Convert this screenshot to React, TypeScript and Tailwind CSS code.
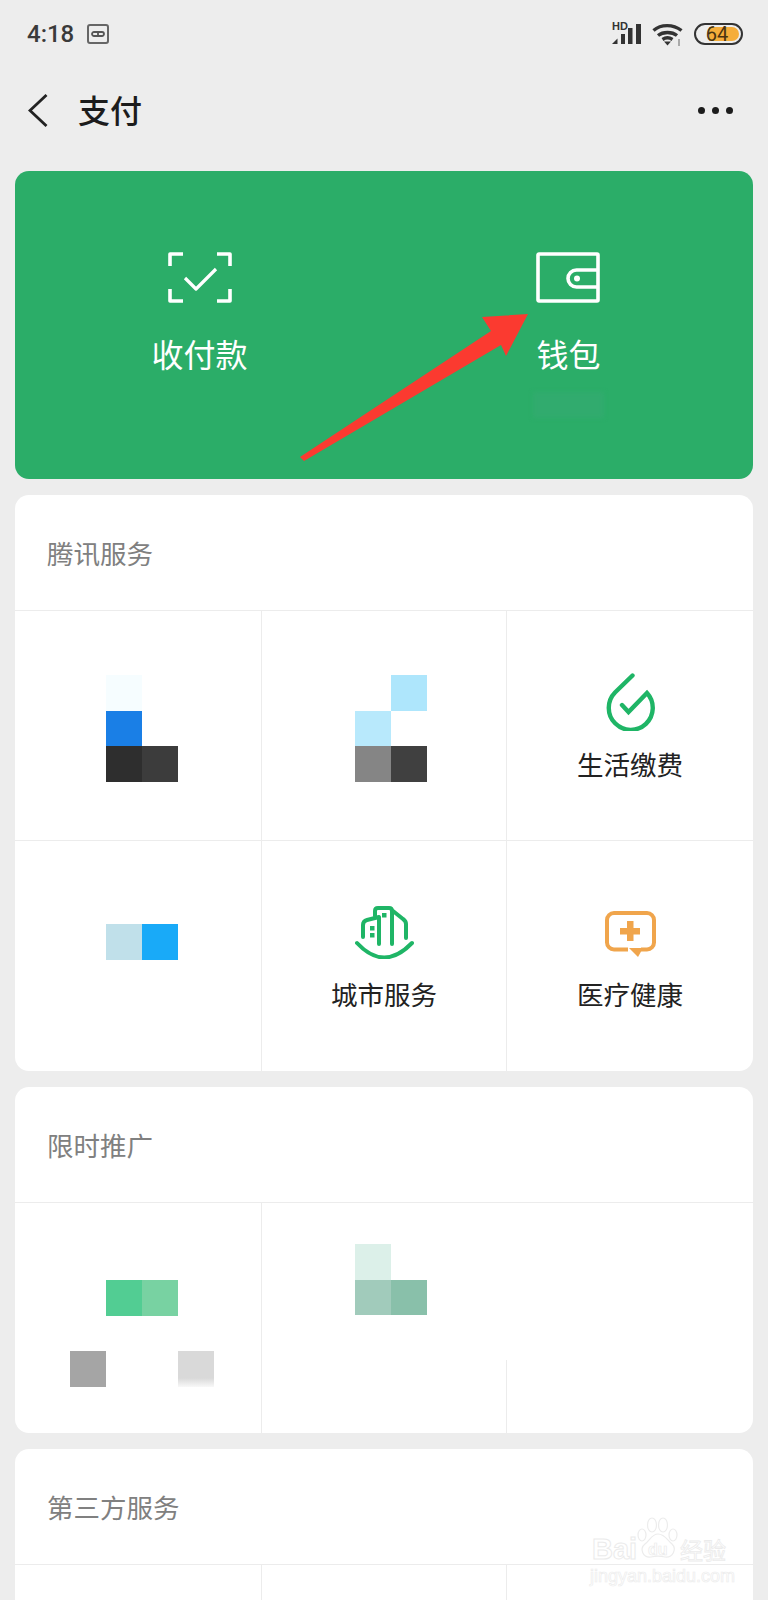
import React from "react";

type MosaicRows = string[][];

function Mosaic({ rows }: { rows: MosaicRows }) {
  return (
    <div className="grid grid-cols-[repeat(4,36px)] auto-rows-[35.5px]">
      {rows.flat().map((color, i) => (
        <div key={i} className={color} />
      ))}
    </div>
  );
}

function DropIcon() {
  return (
    <svg width="49" height="58" viewBox="0 0 49 58" fill="none" stroke="#1fb566" strokeWidth="4.4" strokeLinecap="round" strokeLinejoin="miter">
      <path d="M26.500 2.500L9 19.500A22 22 0 1 0 41 20L22.500 39L16 32" />
    </svg>
  );
}

function CityIcon() {
  return (
    <svg width="59" height="53" viewBox="0 0 59 53" fill="none" stroke="#1fb566" strokeWidth="4" strokeLinecap="round" strokeLinejoin="round">
      <path d="M2 37Q29 66 57 37" />
      <path d="M8 31V19Q8 15 12 14L24 11V38" />
      <path d="M20 10V5Q20 2 23 2H34Q37 2 37 5V38" />
      <path d="M38 5L48 13Q51 15 51 18V32" />
      <rect x="15" y="20" width="4.500" height="4.500" fill="#1fb566" stroke="none" />
      <rect x="15" y="27" width="4.500" height="4.500" fill="#1fb566" stroke="none" />
      <rect x="27" y="7" width="4.500" height="4.500" fill="#1fb566" stroke="none" />
    </svg>
  );
}

function MedicalIcon() {
  return (
    <svg className="mt-1" width="51" height="46" viewBox="0 0 51 46" fill="none">
      <path d="M23 38.500H9a7 7 0 0 1-7-7V9a7 7 0 0 1 7-7H42a7 7 0 0 1 7 7V31.500a7 7 0 0 1-7 7H36" stroke="#f0a54c" strokeWidth="4" />
      <path d="M24 37H38L33 46Z" fill="#f0a54c" />
      <path d="M15 17H22V10H28.500V17H35V23.500H28.500V30H22V23.500H15Z" fill="#f0a54c" />
    </svg>
  );
}

function ServiceCell({ icon, label, className }: { icon: React.ReactNode; label: string; className: string }) {
  return (
    <div className={`flex flex-col items-center pt-[62px] ${className}`}>
      <div className="flex h-[58px] items-center justify-center">{icon}</div>
      <div className="mt-[18px] text-[26.500px] leading-[30px] text-[#222222]">{label}</div>
    </div>
  );
}

function SectionTitle({ title }: { title: string }) {
  return <div className="flex h-[115px] items-center pl-[32px] text-[26.500px] text-[#808080]">{title}</div>;
}

function StatusBar() {
  return (
    <div className="flex h-[68px] items-center justify-between pl-[27px] pr-[25px]">
      <div className="flex items-center gap-[13px]">
        <span className="font-['Roboto',sans-serif] text-[24px] font-medium leading-none text-[#3a3a3a]">4:18</span>
        <div className="flex h-[20px] w-[22px] items-center justify-center rounded-[3px] border-2 border-[#666666]">
          <svg width="14" height="6" viewBox="0 0 14 6" fill="none" stroke="#555555" strokeWidth="1.800">
            <rect x="1" y="1" width="12" height="4" rx="2" />
            <path d="M7 1V5" />
          </svg>
        </div>
      </div>
      <div className="flex items-center">
        <div className="relative h-[22px] w-[30px]">
          <span className="absolute left-0 top-[-2px] font-['Liberation_Sans',sans-serif] text-[11px] font-bold leading-[11px] text-[#333333]">HD</span>
          <svg width="30" height="22" viewBox="0 0 30 22" fill="#333333">
            <path d="M0 21L5.500 15.500V21Z" />
            <rect x="9" y="11" width="4" height="10" />
            <rect x="16" y="5" width="4.500" height="16" />
            <rect x="24" y="1" width="5" height="20" />
          </svg>
        </div>
        <svg className="ml-[10px]" width="32" height="23" viewBox="0 0 32 23" fill="none" stroke="#333333" strokeWidth="3.400">
          <path d="M1.500 7.500C9 1 21 1 29.500 7.500" />
          <path d="M6 12.500C11 8.500 20 8.500 25 12.500" />
          <path d="M10.500 16.500C13.500 14.500 17.500 14.500 20.500 16.500" />
          <path d="M12 18.500L15.500 22.500L19 18.500Z" fill="#333333" stroke="none" />
          <path d="M27 16V23" stroke="#aaaaaa" strokeWidth="2" />
        </svg>
        <div className="relative ml-[10px] h-[22px] w-[49px] rounded-full border-2 border-[#333333]">
          <div className="absolute bottom-[2px] left-[13px] right-[2px] top-[2px] rounded-r-full bg-[#f5ad3a]" />
          <span className="absolute inset-0 flex items-center justify-center pr-[3px] font-['Roboto',sans-serif] text-[20px] leading-none text-[#4a3310]">64</span>
        </div>
      </div>
    </div>
  );
}

function NavBar() {
  return (
    <div className="flex h-[84px] items-center justify-between pl-[28px] pr-[35px]">
      <div className="flex items-center">
        <svg width="20" height="33" viewBox="0 0 20 33" fill="none" stroke="#222222" strokeWidth="2.800">
          <path d="M18.500 1L2 16.500L18.500 32" />
        </svg>
        <span className="ml-[30px] mt-[-2px] text-[32px] font-medium leading-[40px] text-[#1c1c1c]">支付</span>
      </div>
      <div className="flex gap-[7px]">
        <div className="h-[7px] w-[7px] rounded-full bg-[#1c1c1c]" />
        <div className="h-[7px] w-[7px] rounded-full bg-[#1c1c1c]" />
        <div className="h-[7px] w-[7px] rounded-full bg-[#1c1c1c]" />
      </div>
    </div>
  );
}

function PayCard() {
  return (
    <div className="relative grid h-[308px] grid-cols-2 rounded-[14px] bg-[#2bad68] pt-[81px] text-white">
      <div className="flex flex-col items-center">
        <svg width="64" height="51" viewBox="0 0 64 51" fill="none" stroke="white" strokeWidth="3.600" strokeLinejoin="round">
          <path d="M15 2H2V14" />
          <path d="M49 2H62V14" />
          <path d="M2 37V49H15" />
          <path d="M62 37V49H49" />
          <path d="M17 26L28 37L48 17" strokeWidth="3.200" />
        </svg>
        <div className="mt-[30px] text-[32px] leading-[40px]">收付款</div>
      </div>
      <div className="flex flex-col items-center">
        <svg className="ml-[-1px]" width="64" height="51" viewBox="0 0 64 51" fill="none" stroke="white" strokeWidth="3.600">
          <rect x="2" y="2" width="60" height="47" rx="1" />
          <path d="M62 18H40.500a8.500 8.500 0 0 0 0 17H62" />
          <circle cx="41" cy="26.500" r="3" fill="white" stroke="none" />
        </svg>
        <div className="mt-[30px] text-[32px] leading-[40px]">钱包</div>
        <div className="mt-[19px] h-[26px] w-[71px] bg-[#31ab6e] blur-[2px]" />
      </div>
      {/* red annotation arrow */}
      <svg className="absolute inset-0 h-full w-full" viewBox="0 0 738 308">
        <polygon points="513,143 467,146 476,160 285,286 289,290 486,174 491,185" fill="#fb3a30" />
      </svg>
    </div>
  );
}

export default function App() {
  const cellBorder = "border-t border-[#ececec]";
  return (
    <div className="relative h-[1600px] w-[768px] overflow-hidden bg-[#ededed] font-['Noto_Sans_CJK_SC',sans-serif]">
      <StatusBar />
      <NavBar />
      <div className="mt-[19px] flex flex-col gap-4 pl-[15px] pr-[15px]">
        <PayCard />

        <div className="overflow-hidden rounded-[14px] bg-white">
          <SectionTitle title="腾讯服务" />
          <div className="grid grid-cols-[247px_245px_246px] grid-rows-[230px_231px]">
            <div className={`${cellBorder} border-r pl-[55px] pt-[64px]`}>
              <Mosaic
                rows={[
                  ["", "bg-[#f6fdff]", "", ""],
                  ["", "bg-[#1a7fe6]", "", ""],
                  ["", "bg-[#2e2e2e]", "bg-[#3c3c3c]", ""],
                ]}
              />
            </div>
            <div className={`${cellBorder} border-r pl-[93px] pt-[64px]`}>
              <Mosaic
                rows={[
                  ["", "bg-[#aee6fc]", "", ""],
                  ["bg-[#b8e9fc]", "", "", ""],
                  ["bg-[#858585]", "bg-[#404040]", "", ""],
                ]}
              />
            </div>
            <ServiceCell className={cellBorder} icon={<DropIcon />} label="生活缴费" />
            <div className={`${cellBorder} border-r pl-[55px] pt-[83px]`}>
              <Mosaic rows={[["", "bg-[#c0e0ea]", "bg-[#19aaf8]", ""]]} />
            </div>
            <ServiceCell className={`${cellBorder} border-r`} icon={<CityIcon />} label="城市服务" />
            <ServiceCell className={cellBorder} icon={<MedicalIcon />} label="医疗健康" />
          </div>
        </div>

        <div className="overflow-hidden rounded-[14px] bg-white">
          <SectionTitle title="限时推广" />
          <div className="grid grid-cols-[247px_245px_246px] auto-rows-[231px]">
            <div className={`${cellBorder} border-r pl-[55px] pt-[77px]`}>
              <Mosaic
                rows={[
                  ["", "bg-[#52cd93]", "bg-[#78d2a2]", ""],
                  ["", "", "", ""],
                  ["bg-[#a5a5a5]", "", "", "bg-[linear-gradient(#d9d9d9_75%,#f8f8f8)]"],
                ]}
              />
            </div>
            <div className={`${cellBorder} relative pl-[93px] pt-[41px]`}>
              <Mosaic
                rows={[
                  ["bg-[#dcf0e9]", "", "", ""],
                  ["bg-[#a1cbbb]", "bg-[#89c0aa]", "", ""],
                ]}
              />
              <div className="absolute bottom-0 right-0 h-[73px] w-px bg-[#ececec]" />
            </div>
            <div className={cellBorder} />
          </div>
        </div>

        <div className="overflow-hidden rounded-t-[14px] bg-white">
          <SectionTitle title="第三方服务" />
          <div className="grid h-[40px] grid-cols-[247px_245px_246px]">
            <div className={`${cellBorder} border-r`} />
            <div className={`${cellBorder} border-r`} />
            <div className={cellBorder} />
          </div>
        </div>
      </div>

      {/* baidu watermark */}
      <div className="absolute left-[590px] top-[1516px] h-[70px] w-[140px] font-['Liberation_Sans',sans-serif] text-transparent">
        <svg className="absolute left-[47px] top-0" width="44" height="44" viewBox="0 0 44 44" fill="none" stroke="#ececec" strokeWidth="1.200">
          <ellipse cx="15" cy="9" rx="4.500" ry="7" />
          <ellipse cx="26" cy="9" rx="4.500" ry="7" />
          <ellipse cx="5" cy="19" rx="4" ry="6" />
          <ellipse cx="36" cy="19" rx="4" ry="6" />
          <path d="M21 18C28 18 30 24 35 28C40 33 36 42 28 41C24 40 18 40 14 41C6 42 2 33 8 28C13 24 15 18 21 18Z" />
        </svg>
        <span className="absolute left-[2px] top-[18px] text-[29px] font-bold leading-[30px] [-webkit-text-stroke:1px_#ebebeb]">Bai</span>
        <span className="absolute left-[58px] top-[25px] text-[16px] font-bold leading-[18px] [-webkit-text-stroke:0.7px_#ebebeb]">du</span>
        <span className="absolute left-[90px] top-[19px] font-['Noto_Sans_CJK_SC',sans-serif] text-[23px] leading-[28px] [-webkit-text-stroke:0.8px_#ebebeb]">经验</span>
        <span className="absolute left-0 top-[50px] whitespace-nowrap text-[18px] leading-[20px] [-webkit-text-stroke:0.7px_#ededed]">jingyan.baidu.com</span>
      </div>
    </div>
  );
}
